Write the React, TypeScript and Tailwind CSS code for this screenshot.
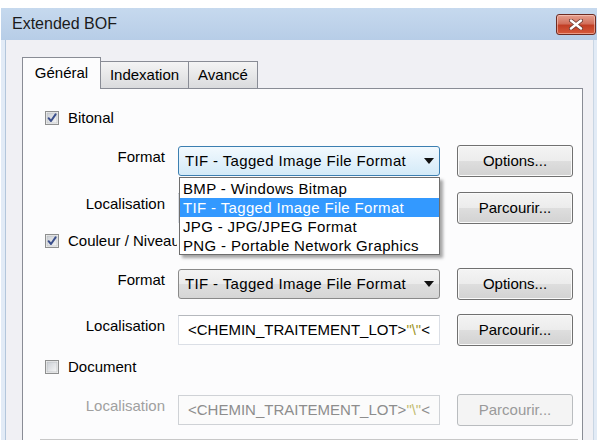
import React from 'react';

const btnBase =
  'h-[32px] w-[116px] rounded-[3px] border text-[15px] flex items-center justify-center';

const Checkbox: React.FC<{ checked?: boolean; label: string; clip?: boolean }> = ({ checked, label, clip }) => (
  <div className="flex items-center h-[16px] ml-[22px]">
    <svg width="14" height="14" viewBox="0 0 14 14" className="shrink-0">
      <defs>
        <linearGradient id="cbfill" x1="0" y1="0" x2="1" y2="1">
          <stop offset="0" stopColor="#cbcfd5" />
          <stop offset="1" stopColor="#f6f6f6" />
        </linearGradient>
      </defs>
      <rect x="0.5" y="0.5" width="13" height="13" fill="#f4f4f4" stroke="#8e8f8f" />
      <rect x="2" y="2" width="10" height="10" fill="url(#cbfill)" stroke="#b5b8bd" strokeWidth="0.6" />
      {checked && (
        <path d="M3.6 7.2 L6 10 L10.6 3.4" fill="none" stroke="#3b4f8c" strokeWidth="2" strokeLinecap="round" strokeLinejoin="round" />
      )}
    </svg>
    <span className={`ml-[9px] text-[15px] text-black whitespace-nowrap ${clip ? 'w-[109px] overflow-hidden' : ''}`}>
      {label}
    </span>
  </div>
);

const PathText: React.FC<{ disabled?: boolean }> = ({ disabled }) => (
  <span className={`whitespace-nowrap ${disabled ? 'text-[#8d8d8d]' : 'text-black'}`}>
    &lt;CHEMIN_TRAITEMENT_LOT&gt;
    <span className={disabled ? 'text-[#c4bd72]' : 'text-[#a09628]'}>"\"</span>
    &lt;
  </span>
);

const Arrow = () => (
  <svg width="10" height="6" viewBox="0 0 10 6" className="shrink-0">
    <path d="M0 0 H10 L5 6 Z" fill="#111" />
  </svg>
);

const Row: React.FC<{
  label: string;
  button: string;
  disabled?: boolean;
  className?: string;
  children: React.ReactNode;
}> = ({ label, button, disabled, className, children }) => (
  <div className={`flex items-center h-[32px] ${className ?? ''}`}>
    <div className={`w-[142px] text-right pb-[8px] text-[15px] ${disabled ? 'text-[#a0a0a0]' : 'text-black'}`}>
      {label}
    </div>
    <div className="ml-[13px] w-[262px] h-[30px]">{children}</div>
    <button
      className={
        disabled
          ? `${btnBase} ml-[17px] border-[#b9bcbf] bg-[#f4f4f4] text-[#9a9a9a]`
          : `${btnBase} ml-[17px] border-[#707070] text-black bg-[linear-gradient(to_bottom,#f4f4f4_0%,#ececec_50%,#dedede_50%,#d2d2d2_100%)] shadow-[inset_0_0_0_1px_#fafafa]`
      }
    >
      {button}
    </button>
  </div>
);

export default function App() {
  return (
    <div className="relative w-[601px] h-[440px] overflow-hidden bg-white pt-[8px] pl-[1px] font-['Liberation_Sans',Arial,sans-serif]">
      <div className="w-[596px] h-[432px] flex flex-col">
        {/* Title bar */}
        <div className="h-[32px] flex items-center justify-between pl-[11px] pr-[1px] bg-[linear-gradient(to_bottom,#c6d9ee,#b7cde7)]">
          <span className="text-[16px] text-[#1b1b1b]">Extended BOF</span>
          <div className="w-[40px] h-[21px] rounded-[3px] border border-[#6e2c22] flex items-center justify-center bg-[linear-gradient(to_bottom,#e5a090_0%,#d2705c_45%,#c23f26_55%,#d65a3c_100%)] shadow-[inset_0_0_0_1px_rgba(255,220,210,0.5)]">
            <svg width="14" height="11" viewBox="0 0 14 11">
              <path d="M2 1.5 L12 9.5 M12 1.5 L2 9.5" stroke="#6a3a32" strokeWidth="4" strokeLinecap="round" />
              <path d="M2 1.5 L12 9.5 M12 1.5 L2 9.5" stroke="#ffffff" strokeWidth="2.4" strokeLinecap="round" />
            </svg>
          </div>
        </div>

        {/* Client */}
        <div className="flex flex-1 min-h-0">
          <div className="w-[4px] bg-[#e2ebf6]" />
          <div className="w-[1px] bg-[#b3c6db]" />
          <div className="flex-1 min-w-0 bg-[#f0f0f4] pl-[16px] pr-[6px] flex flex-col">
            {/* Tabs */}
            <div className="h-[48px] flex items-end text-[15px] shrink-0">
              <div className="relative z-10 -mb-px h-[32px] w-[79px] bg-[#fcfcfd] border-x border-t border-[#898c95] flex items-center justify-center">
                Général
              </div>
              <div className="h-[27px] w-[88px] border-t border-r border-[#898c95] bg-[linear-gradient(to_bottom,#f4f4f4,#dadbdd)] flex items-center justify-center">
                Indexation
              </div>
              <div className="h-[27px] w-[69px] border-t border-r border-[#898c95] bg-[linear-gradient(to_bottom,#f4f4f4,#dadbdd)] flex items-center justify-center">
                Avancé
              </div>
            </div>

            {/* Panel */}
            <div className="flex-1 w-[561px] border-x border-t border-[#898c95] bg-[#fcfcfd] flex flex-col">
              <div className="mt-[21px]">
                <Checkbox checked label="Bitonal" />
              </div>

              <Row label="Format" button="Options..." className="mt-[19px]">
                <div className="h-full rounded-[3px] border border-[#3c7fb1] bg-[linear-gradient(to_bottom,#f2f9fe,#d3eaf8)] flex items-center justify-between pl-[6px] pr-[5px] text-[15px] tracking-[0.35px] whitespace-nowrap">
                  TIF - Tagged Image File Format
                  <Arrow />
                </div>
              </Row>

              <Row label="Localisation" button="Parcourir..." className="mt-[15px]">
                <div className="h-full border border-[#dbdfe6] border-t-[#abadb3] bg-white" />
              </Row>

              <div className="mt-[9px]">
                <Checkbox checked clip label="Couleur / Niveaux de gris" />
              </div>

              <Row label="Format" button="Options..." className="mt-[19px]">
                <div className="h-full rounded-[3px] border border-[#8a8a8a] bg-[linear-gradient(to_bottom,#f3f3f3_0%,#ebebeb_50%,#dedede_51%,#d6d6d6_100%)] flex items-center justify-between pl-[6px] pr-[5px] text-[15px] tracking-[0.35px] whitespace-nowrap">
                  TIF - Tagged Image File Format
                  <Arrow />
                </div>
              </Row>

              <Row label="Localisation" button="Parcourir..." className="mt-[14px]">
                <div className="h-full border border-[#dbdfe6] border-t-[#b5b8bd] bg-white flex items-center pl-[9px] overflow-hidden text-[15px]">
                  <PathText />
                </div>
              </Row>

              <div className="mt-[13px]">
                <Checkbox label="Document" />
              </div>

              <Row label="Localisation" button="Parcourir..." disabled className="mt-[19px]">
                <div className="h-full border border-[#cfd2d6] bg-[#fbfbfb] flex items-center pl-[9px] overflow-hidden text-[15px]">
                  <PathText disabled />
                </div>
              </Row>

              <div className="mt-[13px] ml-[17px] mr-[4px] border-t border-[#c8c8c8]" />
            </div>
          </div>
          <div className="w-[1px] bg-[#c9d6e4]" />
          <div className="w-[3px] bg-[#e2ebf6]" />
        </div>
      </div>

      {/* Opened combo list */}
      <div className="absolute left-[179px] top-[177px] w-[261px] h-[78px] border border-[#6e6e6e] bg-white shadow-[3px_3px_3px_rgba(0,0,0,0.35)] text-[15px] tracking-[0.35px] leading-[19px] py-px">
        <div className="h-[19px] pl-[3px] whitespace-nowrap">BMP - Windows Bitmap</div>
        <div className="h-[19px] pl-[3px] whitespace-nowrap bg-[#3399ff] text-white">TIF - Tagged Image File Format</div>
        <div className="h-[19px] pl-[3px] whitespace-nowrap">JPG - JPG/JPEG Format</div>
        <div className="h-[19px] pl-[3px] whitespace-nowrap">PNG - Portable Network Graphics</div>
      </div>
    </div>
  );
}
